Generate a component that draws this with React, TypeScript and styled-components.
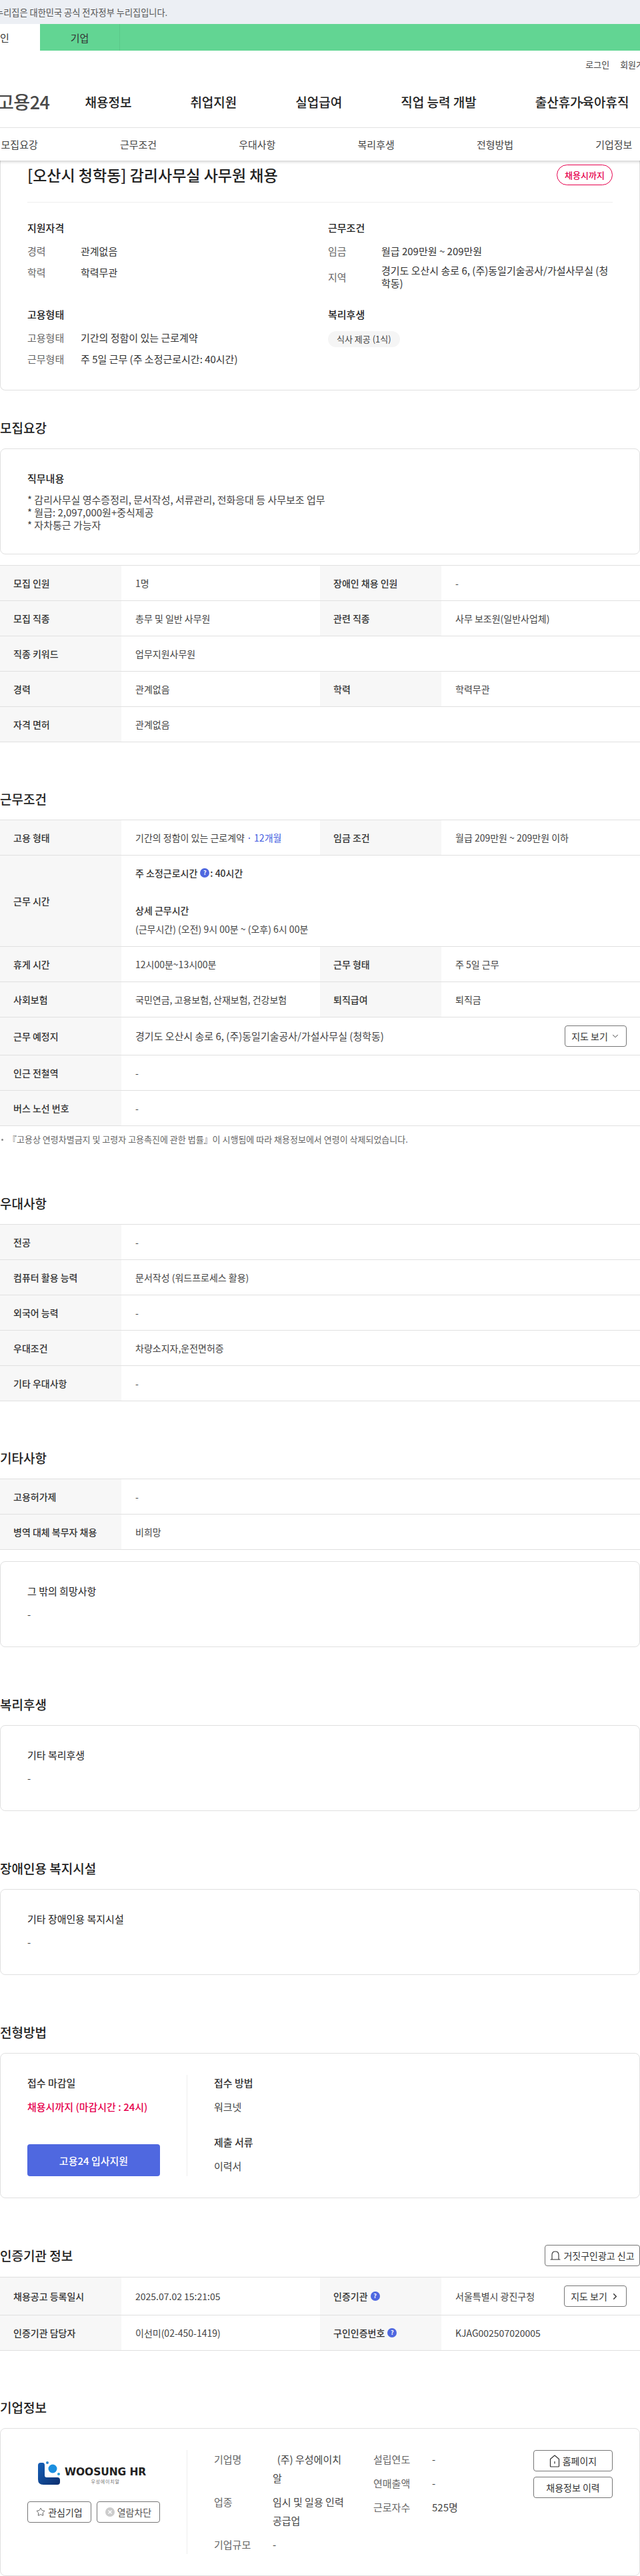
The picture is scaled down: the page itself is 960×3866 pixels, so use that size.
import React from "react";
import styled, { createGlobalStyle } from "styled-components";
import { ChevronDown, ChevronRight, Star } from "lucide-react";

const Global = createGlobalStyle`
  html, body { margin: 0; padding: 0; background: #fff; overflow-x: hidden; }
  body { font-family: "Noto Sans CJK KR", "Noto Sans", sans-serif; color: #333; }
  * { box-sizing: border-box; }
`;

const Page = styled.div`width: 960px; overflow: hidden;`;
const GovBar = styled.div`height: 36px; background: #eceff4; display: flex; align-items: center; font-size: 13.2px; color: #555; white-space: nowrap; margin-left: -22px; padding-left: 0; box-shadow: -22px 0 0 #eceff4;`;
const AudienceBar = styled.div`height: 40px; background: #62d593; display: flex; margin-left: -60px;`;
const AudienceTab = styled.div<{ $active?: boolean }>`
  width: 120px; display: flex; align-items: center; justify-content: center; font-size: 15px; color: #333;
  background: ${(p) => (p.$active ? "#fff" : "transparent")};
  border-right: ${(p) => (p.$active ? "none" : "1px solid #5bc98a")};
`;
const UtilBar = styled.div`height: 40px; display: flex; justify-content: flex-end; align-items: center; gap: 16px; font-size: 13px; color: #444; margin-right: -18px;`;
const MainNav = styled.nav`height: 76px; display: flex; align-items: center; gap: 88px; border-bottom: 1px solid #e8e8e8; padding-bottom: 2px;`;
const Logo = styled.div`font-size: 27px; font-weight: 500; color: #4a4a4a; margin-left: -4px; margin-right: -35px; white-space: nowrap; letter-spacing: -.5px;`;
const NavItem = styled.a`font-size: 19px; font-weight: 500; color: #222; white-space: nowrap;`;
const NavDot = styled.span`margin: 0 -5px;`;
const SubNav = styled.div`height: 49px; display: flex; margin-left: -60px; width: 1070px; position: relative; z-index: 2; background: #fff; box-shadow: 0 2px 4px rgba(0,0,0,.18);`;
const SubItem = styled.a`flex: 1; display: flex; align-items: center; justify-content: center; font-size: 15px; color: #444;`;

const Card = styled.div`border: 1px solid #e0e0e0; border-radius: 8px; background: #fff;`;
const SummaryCard = styled(Card)`border-top: none; border-radius: 0 0 8px 8px; padding: 6px 40px 34px;`;
const SummaryHead = styled.div`display: flex; justify-content: space-between; align-items: center; padding-bottom: 25px; border-bottom: 1px solid #eee;`;
const JobTitle = styled.h1`margin: 0; font-size: 23px; font-weight: 500; color: #222; line-height: 31px;`;
const Deadline = styled.span`height: 31px; width: 84px; border: 1px solid #e6004d; border-radius: 16px; display: flex; align-items: center; justify-content: center; font-size: 13px; font-weight: 500; color: #e6004d;`;
const SummaryGrid = styled.div`display: grid; grid-template-columns: 451px 426px; row-gap: 26px; margin-top: 26px;`;
const Group = styled.div``;
const GroupTitle = styled.h3`margin: 0 0 11px; font-size: 15px; font-weight: 500; line-height: 24px; color: #222;`;
const Fact = styled.div`display: flex; align-items: center; font-size: 15px; line-height: 24px; margin-bottom: 8px; &:last-child { margin-bottom: 0; }`;
const FactKey = styled.span`width: 80px; flex: none; color: #666;`;
const FactVal = styled.span<{ $tight?: boolean }>`color: #333; line-height: ${(p) => (p.$tight ? "18.5px" : "24px")};`;
const Chip = styled.span`display: inline-flex; height: 24px; margin-top: -1px; padding: 0 13px; border-radius: 12px; background: #f5f5f5; align-items: center; font-size: 13px; color: #444;`;

const Section = styled.section<{ $gap?: number }>`margin-top: ${(p) => p.$gap ?? 72}px;`;
const SectionTitle = styled.h2`margin: 0 0 17px; font-size: 19px; font-weight: 500; line-height: 28px; color: #222;`;
const SectionHead = styled.div`display: flex; align-items: center; justify-content: space-between; margin-bottom: 16px; & > h2 { margin: 0; }`;

const TextCard = styled(Card)<{ $top?: number }>`padding: 32px 40px 36px; margin-top: ${(p) => p.$top ?? 0}px;`;
const LeadCard = styled(Card)`padding: 32px 40px 34px;`;
const TextTitle = styled.div<{ $strong?: boolean }>`font-size: 15px; line-height: 24px; font-weight: ${(p) => (p.$strong ? 500 : 400)}; color: #222; margin-bottom: ${(p) => (p.$strong ? 10 : 11)}px;`;
const Bullets = styled.div`font-size: 15px; line-height: 19px; color: #444; white-space: pre-line;`;
const Plain = styled.div`font-size: 15px; line-height: 24px; color: #444;`;

const Table = styled.div<{ $gap?: number }>`border-top: 1px solid #e0e0e0; margin-top: ${(p) => p.$gap ?? 0}px;`;
const Row = styled.div`display: grid; grid-template-columns: 182px 298px 182px 298px; border-bottom: 1px solid #e0e0e0;`;
const Th = styled.div`background: #f7f7f7; padding: 12px 10px 12px 20px; display: flex; align-items: center; gap: 4px; font-size: 14px; font-weight: 500; line-height: 28px; color: #333; white-space: nowrap;`;
const Td = styled.div<{ $wide?: boolean }>`
  padding: 12px 20px 12px 21px; display: flex; align-items: center; justify-content: space-between; gap: 8px;
  font-size: 14px; line-height: 28px; color: #444; white-space: nowrap;
  ${(p) => (p.$wide ? "grid-column: span 3;" : "")}
`;
const HoursBox = styled.div`font-size: 14px; line-height: 28px;`;
const HoursGap = styled.div`height: 28px;`;
const Strong = styled.div`font-weight: 500; color: #333; display: flex; align-items: center;`;
const HintWrap = styled.span`display: inline-flex; margin: 0 1px 0 4px;`;
const Accent = styled.span`color: #3d5ae0;`;
const LargeVal = styled.span`font-size: 15px;`;
const Hint = styled.span`width: 14px; height: 14px; border-radius: 50%; background: #4f68e0; color: #fff; font-size: 9px; font-weight: 700; line-height: 14px; text-align: center; display: inline-block;`;
const Note = styled.p`margin: 10px 0 0; font-size: 13px; line-height: 20px; color: #666; display: flex; align-items: center; gap: 7px; padding-left: 2px;`;
const Dot = styled.i`width: 3px; height: 3px; background: #888; border-radius: 50%; flex: none;`;

const OutlineBtn = styled.button<{ $w?: number; $h?: number }>`
  width: ${(p) => (p.$w ? `${p.$w}px` : "auto")}; height: ${(p) => p.$h ?? 32}px; flex: none;
  background: #fff; border: 1px solid #767676; border-radius: 4px; padding: 0;
  display: inline-flex; align-items: center; justify-content: center; gap: 4px;
  font-family: inherit; font-size: 14px; color: #333; white-space: nowrap;
`;
const Muted = styled.span`color: #555;`;

const ApplyCard = styled(Card)`padding: 32px 40px; display: flex;`;
const ApplyLeft = styled.div`width: 240px; min-height: 152px; flex: none; padding-right: 40px; border-right: 1px solid #eee; display: flex; flex-direction: column;`;
const ApplyRight = styled.div`padding-left: 40px;`;
const FieldLabel = styled.div`font-size: 15px; font-weight: 500; line-height: 24px; color: #333; margin-bottom: 12px;`;
const FieldVal = styled.div<{ $mb?: number; $red?: boolean }>`
  font-size: 15px; line-height: 24px; color: ${(p) => (p.$red ? "#e6004d" : "#444")};
  font-weight: ${(p) => (p.$red ? 500 : 400)}; margin-bottom: ${(p) => p.$mb ?? 0}px; white-space: nowrap;
`;
const ApplyBtn = styled.button`margin-top: auto; height: 48px; width: 199px; border: none; border-radius: 4px; background: #4f68e0; color: #fff; font-family: inherit; font-size: 15px; font-weight: 500;`;

const CompanyCard = styled(Card)`padding: 32px 40px; display: flex;`;
const CompanyLeft = styled.div`width: 240px; flex: none; padding-right: 40px; border-right: 1px solid #eee;`;
const LogoBox = styled.div`height: 77px; display: flex; align-items: flex-start; padding: 17px 0 0 15px; gap: 4px;`;
const LogoWords = styled.div`display: flex; flex-direction: column; align-items: center; margin-top: 7px;`;
const LogoName = styled.span`font-family: "DejaVu Sans", sans-serif; font-size: 15.5px; line-height: 18px; font-weight: 700; letter-spacing: -.1px; color: #222; white-space: nowrap;`;
const LogoSub = styled.span`font-size: 7px; line-height: 10px; color: #777; letter-spacing: .8px;`;
const BtnPair = styled.div`display: flex; gap: 8px;`;
const CompanyInfo = styled.div`display: grid; grid-template-columns: 199px 239px; padding-left: 40px;`;
const InfoCol = styled.div``;
const SideCol = styled(InfoCol)`padding-left: 40px;`;
const InfoRow = styled.div`display: flex; font-size: 15px; line-height: 28px; margin-bottom: 8px; &:last-child { margin-bottom: 0; }`;
const InfoKey = styled.span`width: 88px; flex: none; color: #666;`;
const InfoVal = styled.span`width: 111px; color: #444;`;
const CompanyBtns = styled.div`margin-left: auto; display: flex; flex-direction: column; gap: 8px;`;

const DomeIcon = () => (
  <svg width="16" height="16" viewBox="0 0 16 16" fill="none" stroke="#333" strokeWidth="1.1">
    <path d="M3 14 V7 Q3 2 8 2 Q13 2 13 7 V14 M1 14 H15" strokeLinecap="round" />
  </svg>
);
const HouseIcon = () => (
  <svg width="16" height="20" viewBox="0 0 16 20" fill="none" stroke="#333" strokeWidth="1.2">
    <path d="M8 2 L14.5 7.5 V18 Q14.5 19 13.5 19 H2.5 Q1.5 19 1.5 18 V7.5 Z" strokeLinejoin="round" />
    <path d="M8 11 V14.5" />
  </svg>
);
const BlockIcon = () => (
  <svg width="14" height="14" viewBox="0 0 14 14">
    <circle cx="7" cy="7" r="7" fill="#ccc" />
    <path d="M4.5 4.5 L9.5 9.5 M9.5 4.5 L4.5 9.5" stroke="#fff" strokeWidth="1.3" />
  </svg>
);
const LogoMark = () => (
  <svg width="37" height="36" viewBox="0 0 37 36">
    <defs>
      <linearGradient id="lg" x1="0" y1="0" x2="1" y2="1">
        <stop offset="0" stopColor="#1560b8" />
        <stop offset="1" stopColor="#0e2f6e" />
      </linearGradient>
    </defs>
    <path d="M1 6 Q1 2 5 2 H8 Q11 2 11 6 V21 Q11 24 14 24 H30 Q34 24 34 28 V31 Q34 35 30 35 H9 Q1 35 1 27 Z" fill="url(#lg)" />
    <circle cx="23" cy="11" r="6.5" fill="#1b8fe0" />
    <circle cx="15" cy="2" r="2" fill="#2b86cf" />
    <circle cx="32" cy="19" r="2" fill="#2b9fd8" />
  </svg>
);

type Cell = [React.ReactNode, React.ReactNode];
const InfoTable = ({ rows, gap }: { rows: Cell[][]; gap?: number }) => (
  <Table $gap={gap}>
    {rows.map((r, i) => (
      <Row key={i}>
        {r.map(([k, v], j) => (
          <React.Fragment key={j}>
            <Th>{k}</Th>
            <Td $wide={r.length === 1}>{v}</Td>
          </React.Fragment>
        ))}
      </Row>
    ))}
  </Table>
);

export default function App() {
  return (
    <Page>
      <Global />
      <GovBar>이 누리집은 대한민국 공식 전자정부 누리집입니다.</GovBar>
      <AudienceBar>
        <AudienceTab $active>개인</AudienceTab>
        <AudienceTab>기업</AudienceTab>
      </AudienceBar>
      <UtilBar>
        <span>로그인</span>
        <span>회원가입</span>
      </UtilBar>
      <MainNav>
        <Logo>고용24</Logo>
        <NavItem>채용정보</NavItem>
        <NavItem>취업지원</NavItem>
        <NavItem>실업급여</NavItem>
        <NavItem>직업 능력 개발</NavItem>
        <NavItem>출산휴가<NavDot>·</NavDot>육아휴직</NavItem>
      </MainNav>
      <SubNav>
        {["모집요강", "근무조건", "우대사항", "복리후생", "전형방법", "기업정보"].map((t) => (
          <SubItem key={t}>{t}</SubItem>
        ))}
      </SubNav>

      <SummaryCard>
        <SummaryHead>
          <JobTitle>[오산시 청학동] 감리사무실 사무원 채용</JobTitle>
          <Deadline>채용시까지</Deadline>
        </SummaryHead>
        <SummaryGrid>
          <Group>
            <GroupTitle>지원자격</GroupTitle>
            <Fact><FactKey>경력</FactKey><FactVal>관계없음</FactVal></Fact>
            <Fact><FactKey>학력</FactKey><FactVal>학력무관</FactVal></Fact>
          </Group>
          <Group>
            <GroupTitle>근무조건</GroupTitle>
            <Fact><FactKey>임금</FactKey><FactVal>월급 209만원 ~ 209만원</FactVal></Fact>
            <Fact><FactKey>지역</FactKey><FactVal $tight>경기도 오산시 송로 6, (주)동일기술공사/가설사무실 (청학동)</FactVal></Fact>
          </Group>
          <Group>
            <GroupTitle>고용형태</GroupTitle>
            <Fact><FactKey>고용형태</FactKey><FactVal>기간의 정함이 있는 근로계약</FactVal></Fact>
            <Fact><FactKey>근무형태</FactKey><FactVal>주 5일 근무 (주 소정근로시간: 40시간)</FactVal></Fact>
          </Group>
          <Group>
            <GroupTitle>복리후생</GroupTitle>
            <Chip>식사 제공 (1식)</Chip>
          </Group>
        </SummaryGrid>
      </SummaryCard>

      <Section $gap={42}>
        <SectionTitle>모집요강</SectionTitle>
        <LeadCard>
          <TextTitle $strong>직무내용</TextTitle>
          <Bullets>{"* 감리사무실 영수증정리, 문서작성, 서류관리, 전화응대 등 사무보조 업무\n* 월급: 2,097,000원+중식제공\n* 자차통근 가능자"}</Bullets>
        </LeadCard>
        <InfoTable
          gap={16}
          rows={[
            [["모집 인원", "1명"], ["장애인 채용 인원", "-"]],
            [["모집 직종", "총무 및 일반 사무원"], ["관련 직종", "사무 보조원(일반사업체)"]],
            [["직종 키워드", "업무지원사무원"]],
            [["경력", "관계없음"], ["학력", "학력무관"]],
            [["자격 면허", "관계없음"]],
          ]}
        />
      </Section>

      <Section $gap={71}>
        <SectionTitle>근무조건</SectionTitle>
        <InfoTable
          rows={[
            [["고용 형태", <span>기간의 정함이 있는 근로계약 <Accent>· 12개월</Accent></span>], ["임금 조건", "월급 209만원 ~ 209만원 이하"]],
            [["근무 시간", (
              <HoursBox>
                <Strong>주 소정근로시간<HintWrap><Hint>?</Hint></HintWrap>: 40시간</Strong>
                <HoursGap />
                <Strong>상세 근무시간</Strong>
                <div>(근무시간) (오전) 9시 00분 ~ (오후) 6시 00분</div>
              </HoursBox>
            )]],
            [["휴게 시간", "12시00분~13시00분"], ["근무 형태", "주 5일 근무"]],
            [["사회보험", "국민연금, 고용보험, 산재보험, 건강보험"], ["퇴직급여", "퇴직금"]],
            [["근무 예정지", (
              <>
                <LargeVal>경기도 오산시 송로 6, (주)동일기술공사/가설사무실 (청학동)</LargeVal>
                <OutlineBtn $w={93}>지도 보기 <ChevronDown size={14} strokeWidth={1.6} /></OutlineBtn>
              </>
            )]],
            [["인근 전철역", "-"]],
            [["버스 노선 번호", "-"]],
          ]}
        />
        <Note><Dot />『고용상 연령차별금지 및 고령자 고용촉진에 관한 법률』이 시행됨에 따라 채용정보에서 연령이 삭제되었습니다.</Note>
      </Section>

      <Section>
        <SectionTitle>우대사항</SectionTitle>
        <InfoTable
          rows={[
            [["전공", "-"]],
            [["컴퓨터 활용 능력", "문서작성 (워드프로세스 활용)"]],
            [["외국어 능력", "-"]],
            [["우대조건", "차량소지자,운전면허증"]],
            [["기타 우대사항", "-"]],
          ]}
        />
      </Section>

      <Section $gap={71}>
        <SectionTitle>기타사항</SectionTitle>
        <InfoTable rows={[[["고용허가제", "-"]], [["병역 대체 복무자 채용", "비희망"]]]} />
        <TextCard $top={17}>
          <TextTitle>그 밖의 희망사항</TextTitle>
          <Plain>-</Plain>
        </TextCard>
      </Section>

      <Section>
        <SectionTitle>복리후생</SectionTitle>
        <TextCard>
          <TextTitle>기타 복리후생</TextTitle>
          <Plain>-</Plain>
        </TextCard>
      </Section>

      <Section>
        <SectionTitle>장애인용 복지시설</SectionTitle>
        <TextCard>
          <TextTitle>기타 장애인용 복지시설</TextTitle>
          <Plain>-</Plain>
        </TextCard>
      </Section>

      <Section>
        <SectionTitle>전형방법</SectionTitle>
        <ApplyCard>
          <ApplyLeft>
            <FieldLabel>접수 마감일</FieldLabel>
            <FieldVal $red>채용시까지 (마감시간 : 24시)</FieldVal>
            <ApplyBtn>고용24 입사지원</ApplyBtn>
          </ApplyLeft>
          <ApplyRight>
            <FieldLabel>접수 방법</FieldLabel>
            <FieldVal $mb={29}>워크넷</FieldVal>
            <FieldLabel>제출 서류</FieldLabel>
            <FieldVal>이력서</FieldVal>
          </ApplyRight>
        </ApplyCard>
      </Section>

      <Section $gap={70}>
        <SectionHead>
          <SectionTitle>인증기관 정보</SectionTitle>
          <OutlineBtn $w={143}><DomeIcon /> 거짓구인광고 신고</OutlineBtn>
        </SectionHead>
        <InfoTable
          rows={[
            [["채용공고 등록일시", "2025.07.02 15:21:05"], [<>인증기관 <Hint>?</Hint></>, (
              <>
                <span>서울특별시 광진구청</span>
                <OutlineBtn $w={94}>지도 보기 <ChevronRight size={15} strokeWidth={2.2} /></OutlineBtn>
              </>
            )]],
            [["인증기관 담당자", "이선미(02-450-1419)"], [<>구인인증번호 <Hint>?</Hint></>, "KJAG002507020005"]],
          ]}
        />
      </Section>

      <Section $gap={71}>
        <SectionTitle>기업정보</SectionTitle>
        <CompanyCard>
          <CompanyLeft>
            <LogoBox>
              <LogoMark />
              <LogoWords>
                <LogoName>WOOSUNG HR</LogoName>
                <LogoSub>우성에이치알</LogoSub>
              </LogoWords>
            </LogoBox>
            <BtnPair>
              <OutlineBtn $w={96}><Star size={14} strokeWidth={1.3} /> 관심기업</OutlineBtn>
              <OutlineBtn $w={95}><BlockIcon /> <Muted>열람차단</Muted></OutlineBtn>
            </BtnPair>
          </CompanyLeft>
          <CompanyInfo>
            <InfoCol>
              <InfoRow><InfoKey>기업명</InfoKey><InfoVal>{"\u00A0\u00A0(주) 우성에이치알"}</InfoVal></InfoRow>
              <InfoRow><InfoKey>업종</InfoKey><InfoVal>임시 및 일용 인력 공급업</InfoVal></InfoRow>
              <InfoRow><InfoKey>기업규모</InfoKey><InfoVal>-</InfoVal></InfoRow>
            </InfoCol>
            <SideCol>
              <InfoRow><InfoKey>설립연도</InfoKey><InfoVal>-</InfoVal></InfoRow>
              <InfoRow><InfoKey>연매출액</InfoKey><InfoVal>-</InfoVal></InfoRow>
              <InfoRow><InfoKey>근로자수</InfoKey><InfoVal>525명</InfoVal></InfoRow>
            </SideCol>
          </CompanyInfo>
          <CompanyBtns>
            <OutlineBtn $w={119}><HouseIcon /> 홈페이지</OutlineBtn>
            <OutlineBtn $w={119}>채용정보 이력</OutlineBtn>
          </CompanyBtns>
        </CompanyCard>
      </Section>
    </Page>
  );
}
